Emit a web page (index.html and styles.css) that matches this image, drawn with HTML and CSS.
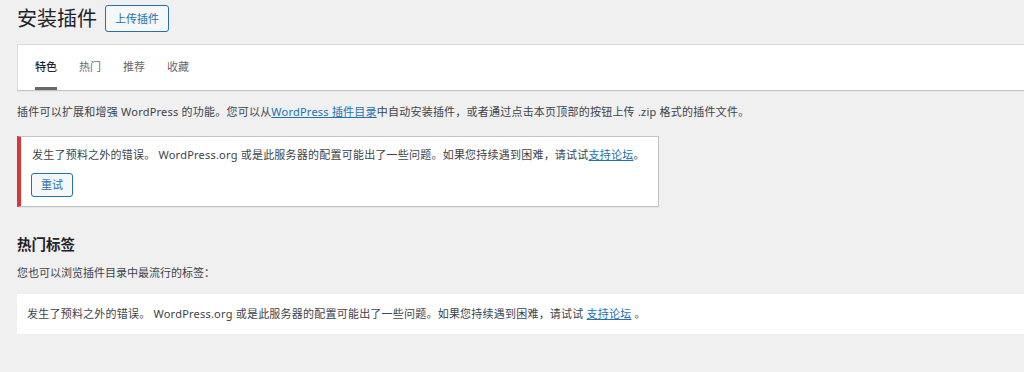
FILE: index.html
```html
<!DOCTYPE html>
<html lang="zh-CN">
<head>
<meta charset="utf-8">
<title>安装插件</title>
<link rel="stylesheet" href="styles.css">
</head>
<body>
<div class="wrap">
  <div class="head">
    <h1 class="title">安装插件</h1>
    <a class="btn" href="#">上传插件</a>
  </div>
  <div class="filter">
    <ul class="tabs">
      <li class="tab current">特色</li>
      <li class="tab">热门</li>
      <li class="tab">推荐</li>
      <li class="tab">收藏</li>
    </ul>
  </div>
  <p class="intro">插件可以扩展和增强 WordPress 的功能。您可以从<a href="#">WordPress 插件目录</a>中自动安装插件，或者通过点击本页顶部的按钮上传 .zip 格式的插件文件。</p>
  <div class="notice">
    <p class="msg">发生了预料之外的错误。 WordPress.org 或是此服务器的配置可能出了一些问题。如果您持续遇到困难，请试试<a href="#">支持论坛</a>。</p>
    <a class="btn small" href="#">重试</a>
  </div>
  <h2 class="sub">热门标签</h2>
  <p class="intro2">您也可以浏览插件目录中最流行的标签：</p>
  <div class="box">发生了预料之外的错误。 WordPress.org 或是此服务器的配置可能出了一些问题。如果您持续遇到困难，请试试 <a href="#">支持论坛</a> 。</div>
</div>
</body>
</html>
```
FILE: styles.css
```css
html, body {
  margin: 0;
  padding: 0;
  background: #f0f0f1;
  overflow: hidden;
}
body {
  font-family: "Noto Sans", "Noto Sans CJK SC", sans-serif;
  font-size: 11px;
  line-height: 18px;
  color: #3c434a;
}
a { color: #2271b1; text-decoration: underline; }
.wrap {
  padding-left: 17px;
}
.head {
  display: flex;
  align-items: center;
  gap: 8px;
  margin-top: 5px;
  height: 27px;
}
.title {
  margin: 0;
  font-size: 20px;
  font-weight: 400;
  line-height: 27px;
  color: #1d2327;
}
.btn {
  display: inline-flex;
  align-items: center;
  justify-content: center;
  box-sizing: border-box;
  height: 27px;
  padding: 0 9px;
  border: 1px solid #2271b1;
  border-radius: 3px;
  background: #f6f7f7;
  color: #2271b1;
  text-decoration: none;
  font-size: 11px;
}
.btn.small {
  height: 24px;
  padding: 0 9px;
  margin-left: -1px;
}
.filter {
  margin-top: 12px;
  margin-right: -4px;
  height: 45px;
  background: #fff;
  border: 1px solid #dcdcde;
  border-bottom-color: #c3c4c7;
  box-shadow: 0 1px 1px rgba(0,0,0,.04);
}
.tabs {
  display: flex;
  gap: 22px;
  margin: 0;
  padding: 0 0 0 17px;
  list-style: none;
}
.tab {
  display: flex;
  align-items: center;
  box-sizing: border-box;
  height: 45px;
  padding-top: 1px;
  border-bottom: 3px solid transparent;
  color: #646970;
}
.tab.current {
  color: #1d2327;
  font-weight: 500;
  border-bottom-color: #646970;
}
.intro, .msg, .box {
  letter-spacing: 0.22px;
}
.intro {
  margin: 12px 0 0;
}
.notice {
  box-sizing: border-box;
  width: 642px;
  margin-top: 15px;
  padding: 9px 12px 9px 11px;
  background: #fff;
  border: 1px solid #c3c4c7;
  border-left: 4px solid #d63638;
  box-shadow: 0 1px 1px rgba(0,0,0,.04);
}
.msg {
  margin: 0 0 9px;
}
.sub {
  margin: 27px 0 0;
  font-size: 14.5px;
  line-height: 20px;
  font-weight: 700;
  color: #1d2327;
}
.intro2 {
  margin: 10px 0 0;
}
.box {
  margin-top: 12px;
  margin-right: -4px;
  padding: 11px 10px 11px;
  background: #fff;
}
```
